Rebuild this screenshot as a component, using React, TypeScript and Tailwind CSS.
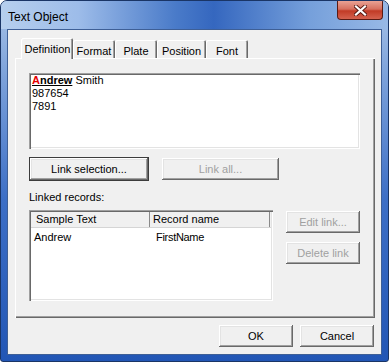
import React from "react";

const raised =
  "shadow-[inset_-1px_-1px_#696969,inset_1px_1px_#ffffff,inset_-2px_-2px_#a0a0a0,inset_2px_2px_#e3e3e3]";
const sunken =
  "shadow-[inset_1px_1px_#a0a0a0,inset_2px_2px_#696969,inset_-1px_-1px_#ffffff,inset_-2px_-2px_#e3e3e3]";

const Button = ({
  label,
  disabled,
  focused,
  className = "",
}: {
  label: string;
  disabled?: boolean;
  focused?: boolean;
  className?: string;
}) => (
  <div
    className={`flex items-center justify-center h-[22px] bg-[#f0f0f0] ${raised} ${
      focused ? "outline outline-1 outline-[#3c3c3c]" : ""
    } ${disabled ? "text-[#a0a0a0]" : "text-black"} ${className}`}
  >
    {label}
  </div>
);

const tabs = [
  { name: "Format", w: "w-[42px]" },
  { name: "Plate", w: "w-[42px]" },
  { name: "Position", w: "w-[49px]" },
  { name: "Font", w: "w-[42px]" },
];

const App = () => {
  return (
    <div
      className="w-[389px] h-[362px] flex flex-col rounded-t-[7px] rounded-b-[3px] border border-[#1a3566] bg-[linear-gradient(180deg,#a9c4e8_0%,#7ea3db_20%,#3d6fc6_55%,#2256b5_100%)] overflow-hidden"
      style={{ fontFamily: '"Liberation Sans", Arial, sans-serif' }}
    >
      {/* title bar */}
      <div className="h-[28px] flex items-start justify-between bg-[linear-gradient(90deg,#b6cfee_0%,#9dbce9_20%,#4a7bc9_45%,#3567bf_55%,#76a0db_80%,#98b9e6_100%)]">
        <span className="mt-[7px] ml-[7px] text-[12px] text-black">Text Object</span>
        <div className="mr-[5px] w-[46px] h-[19px] rounded-b-[4px] border border-t-0 border-[#5a1b14] bg-[linear-gradient(180deg,#e9a294_0%,#d6705f_45%,#c23b26_55%,#d5624f_100%)] flex items-center justify-center">
          <svg width="13" height="11" viewBox="0 0 13 11">
            <path d="M2 1.5 L11 9.5 M11 1.5 L2 9.5" stroke="#5a1b14" strokeWidth="4" strokeLinecap="square" />
            <path d="M2 1.5 L11 9.5 M11 1.5 L2 9.5" stroke="#ffffff" strokeWidth="2.2" strokeLinecap="square" />
          </svg>
        </div>
      </div>

      {/* client area */}
      <div className="ml-[6px] w-[375px] h-[326px] bg-[#f0f0f0] border border-[#3e5f96] text-[11px] text-black flex flex-col">
        {/* tabs */}
        <div className="ml-[13px] mt-[7px] h-[21px] flex items-end">
          <div className="relative z-10 -mb-px w-[52px] h-[21px] bg-[#f0f0f0] rounded-t-[2px] shadow-[inset_1px_1px_#ffffff,inset_-1px_0_#696969,inset_-2px_0_#a0a0a0] flex items-start pt-[3px] pl-[1px] justify-center">
            Definition
          </div>
          {tabs.map((t) => (
            <div
              key={t.name}
              className={`${t.w} h-[18px] rounded-t-[2px] shadow-[inset_1px_1px_#ffffff,inset_-1px_0_#696969,inset_-2px_0_#a0a0a0] flex items-start pt-[3px] justify-center`}
            >
              {t.name}
            </div>
          ))}
        </div>

        {/* panel */}
        <div className="ml-[7px] w-[360px] h-[260px] shadow-[inset_1px_1px_#ffffff,inset_-1px_-1px_#696969,inset_-2px_-2px_#a0a0a0] flex flex-col px-[14px]">
          <div className={`mt-[15px] w-[331px] h-[76px] bg-white ${sunken} px-[3px] pt-[1px] leading-[13px]`}>
            <div>
              <span className="font-bold underline">
                <span className="text-[#e60000]">A</span>ndrew
              </span>{" "}
              Smith
            </div>
            <div>987654</div>
            <div>7891</div>
          </div>

          <div className="mt-[9px] flex gap-[14px]">
            <Button label="Link selection..." focused className="w-[118px] ml-px" />
            <Button label="Link all..." disabled className="w-[117px]" />
          </div>

          <div className="mt-[11px] leading-[13px]">Linked records:</div>

          <div className="mt-[6px] flex">
            <div className={`w-[244px] h-[91px] bg-white ${sunken} p-[2px]`}>
              <div className="flex h-[16px] bg-[#f0f0f0] border-b border-[#d5d5d5]">
                <div className="w-[119px] pl-[5px] flex items-center border-r border-[#8a8a8a]">
                  Sample Text
                </div>
                <div className="w-[120px] pl-[3px] flex items-center border-r border-[#8a8a8a]">
                  Record name
                </div>
              </div>
              <div className="flex mt-[3px] leading-[13px]">
                <div className="w-[122px] pl-[3px]">Andrew</div>
                <div className="pl-[3px] tracking-[-0.3px]">FirstName</div>
              </div>
            </div>
            <div className="ml-[13px] flex flex-col gap-[9px] mt-px">
              <Button label="Edit link..." disabled className="w-[74px]" />
              <Button label="Delete link" disabled className="w-[74px]" />
            </div>
          </div>
        </div>

        {/* footer */}
        <div className="mt-[7px] flex justify-end gap-[7px] mr-[7px]">
          <Button label="OK" className="w-[74px]" />
          <Button label="Cancel" className="w-[74px]" />
        </div>
      </div>
    </div>
  );
};

export default App;
